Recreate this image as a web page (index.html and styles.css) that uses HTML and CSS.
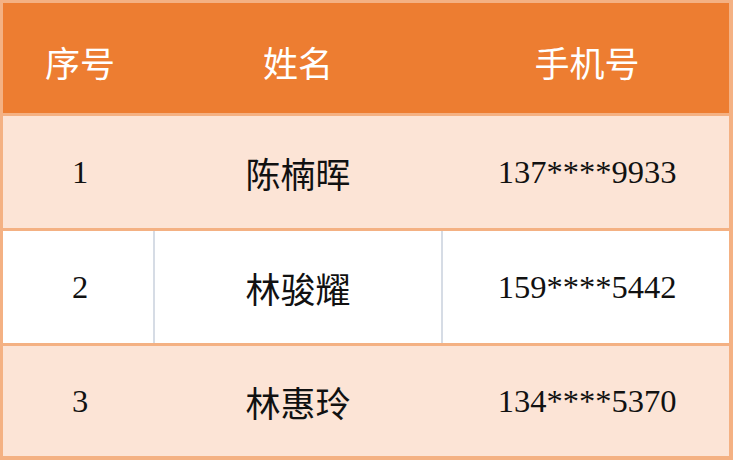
FILE: index.html
```html
<!DOCTYPE html>
<html lang="zh">
<head>
<meta charset="utf-8">
<link rel="stylesheet" href="styles.css">
</head>
<body>
<div class="table">
  <div class="row head">
    <div class="cell c1 zh">序号</div>
    <div class="cell c2 zh">姓名</div>
    <div class="cell c3 zh">手机号</div>
  </div>
  <div class="row tint r1">
    <div class="cell c1">1</div>
    <div class="cell c2 zh">陈楠晖</div>
    <div class="cell c3">137****9933</div>
  </div>
  <div class="row plain r2">
    <div class="cell c1">2</div>
    <div class="cell c2 zh">林骏耀</div>
    <div class="cell c3">159****5442</div>
  </div>
  <div class="row tint r3">
    <div class="cell c1">3</div>
    <div class="cell c2 zh">林惠玲</div>
    <div class="cell c3">134****5370</div>
  </div>
</div>
</body>
</html>
```
FILE: styles.css
```css
html, body {
  margin: 0;
  padding: 0;
  background: #F4B183;
}
body {
  width: 733px;
  height: 460px;
  font-family: "Liberation Serif", "Noto Sans CJK SC", serif;
  font-size: 32.5px;
  color: #111;
}
.table {
  box-sizing: border-box;
  width: 733px;
  height: 460px;
  padding: 3px 4px 4px 3px;
  display: flex;
  flex-direction: column;
  gap: 3px;
  background: #F4B183;
}
.row {
  display: grid;
  grid-template-columns: 150px 286px 286px;
  column-gap: 2px;
}
.cell {
  display: flex;
  align-items: center;
  justify-content: center;
}
.zh {
  font-family: "Noto Sans CJK SC", sans-serif;
  font-size: 35px;
}
.head {
  height: 110px;
  background: #ED7D31;
}
.head .cell {
  color: #fff;
  padding-top: 6px;
  box-sizing: border-box;
}
.r1, .r2 { height: 112px; }
.r3 { height: 110px; }
.tint {
  background: #FCE4D6;
}
.plain {
  background: #D6DCE5;
}
.plain .cell {
  background: #fff;
}
.c3 { padding-left: 2px; }
.c1 { padding-left: 4px; }
```
